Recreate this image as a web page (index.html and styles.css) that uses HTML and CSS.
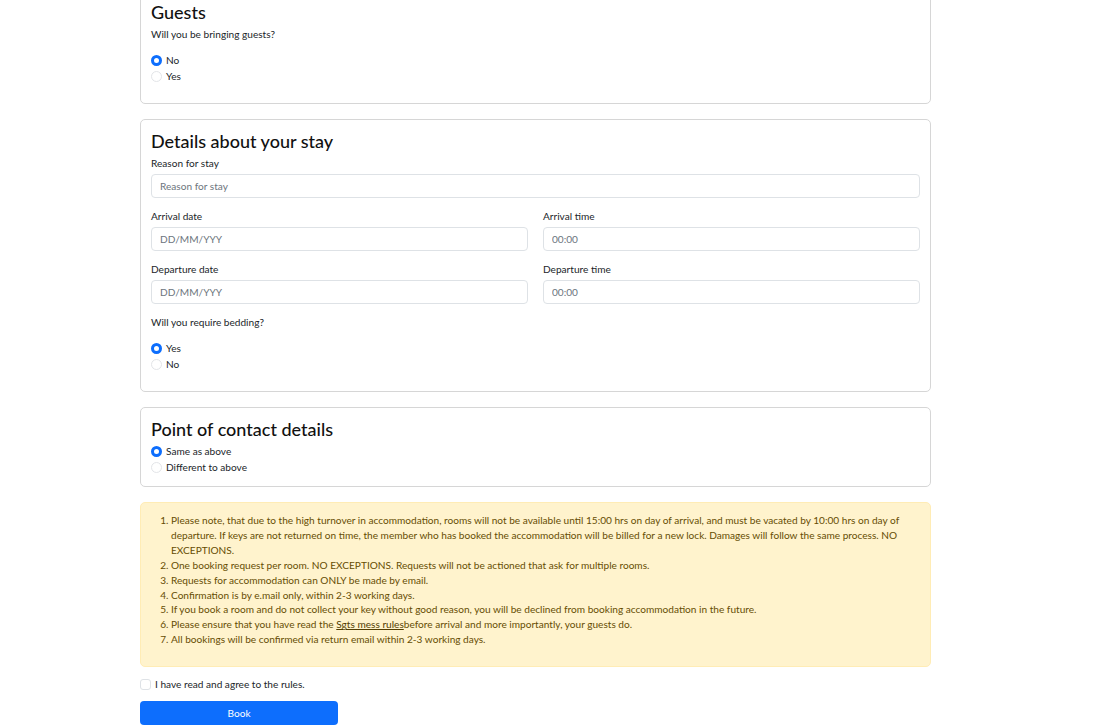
FILE: index.html
```html
<!DOCTYPE html>
<html lang="en">
<head>
<meta charset="utf-8">
<title>Accommodation booking</title>
<link rel="stylesheet" href="styles.css">
</head>
<body>
<main class="page">
  <section class="card card-guests">
    <h3 class="card-title">Guests</h3>
    <p class="question">Will you be bringing guests?</p>
    <div class="radio-group spaced">
      <label class="check"><input type="radio" name="guests" checked><span>No</span></label>
      <label class="check"><input type="radio" name="guests"><span>Yes</span></label>
    </div>
  </section>

  <section class="card">
    <h3 class="card-title">Details about your stay</h3>
    <div class="field">
      <label class="field-label">Reason for stay</label>
      <input class="control" type="text" placeholder="Reason for stay">
    </div>
    <div class="row">
      <div class="field">
        <label class="field-label">Arrival date</label>
        <input class="control" type="text" placeholder="DD/MM/YYY">
      </div>
      <div class="field">
        <label class="field-label">Arrival time</label>
        <input class="control" type="text" placeholder="00:00">
      </div>
    </div>
    <div class="row">
      <div class="field">
        <label class="field-label">Departure date</label>
        <input class="control" type="text" placeholder="DD/MM/YYY">
      </div>
      <div class="field">
        <label class="field-label">Departure time</label>
        <input class="control" type="text" placeholder="00:00">
      </div>
    </div>
    <p class="question">Will you require bedding?</p>
    <div class="radio-group spaced">
      <label class="check"><input type="radio" name="bedding" checked><span>Yes</span></label>
      <label class="check"><input type="radio" name="bedding"><span>No</span></label>
    </div>
  </section>

  <section class="card card-contact">
    <h3 class="card-title">Point of contact details</h3>
    <div class="radio-group">
      <label class="check"><input type="radio" name="contact" checked><span>Same as above</span></label>
      <label class="check"><input type="radio" name="contact"><span>Different to above</span></label>
    </div>
  </section>

  <div class="alert">
    <ol class="rules">
      <li>Please note, that due to the high turnover in accommodation, rooms will not be available until 15:00 hrs on day of arrival, and must be vacated by 10:00 hrs on day of departure. If keys are not returned on time, the member who has booked the accommodation will be billed for a new lock. Damages will follow the same process. NO EXCEPTIONS.</li>
      <li>One booking request per room. NO EXCEPTIONS. Requests will not be actioned that ask for multiple rooms.</li>
      <li>Requests for accommodation can ONLY be made by email.</li>
      <li>Confirmation is by e.mail only, within 2-3 working days.</li>
      <li>If you book a room and do not collect your key without good reason, you will be declined from booking accommodation in the future.</li>
      <li>Please ensure that you have read the <a href="#">Sgts mess rules</a>before arrival and more importantly, your guests do.</li>
      <li>All bookings will be confirmed via return email within 2-3 working days.</li>
    </ol>
  </div>

  <label class="agree"><input type="checkbox"><span>I have read and agree to the rules.</span></label>
  <button class="btn" type="button">Book</button>
</main>
</body>
</html>
```
FILE: styles.css
```css
* { box-sizing: border-box; }
html, body { margin: 0; padding: 0; background: #fff; }
body {
  font-family: Lato, "Open Sans", sans-serif;
  font-size: 10.1px;
  line-height: 16px;
  color: #212529;
}
.page {
  width: 791px;
  margin: -10px 0 0 140px;
}
.card {
  border: 1px solid #d6d6d6;
  border-radius: 5px;
  padding: 10px 10px 10px;
  margin-bottom: 15px;
}
.card-contact { padding-bottom: 11px; }
.card-title {
  margin: 0 0 3px;
  font-size: 18px;
  line-height: 22px;
  font-weight: 500;
  color: #111;
}
.question { margin: 0 0 10px; }
.radio-group { display: flex; flex-direction: column; }
.radio-group.spaced { margin-bottom: 9px; }
.check { display: flex; align-items: center; height: 16px; }
.check input {
  appearance: none;
  -webkit-appearance: none;
  width: 11px; height: 11px;
  margin: 0 4px 0 0;
  border: 1px solid #e3e5e8;
  border-radius: 50%;
  background: #fff;
}
.check input:checked {
  border: 3px solid #0d6efd;
  background: #fff;
}
.field { display: flex; flex-direction: column; margin-bottom: 10px; }
.field-label { line-height: 16px; margin-bottom: 3px; }
.control {
  height: 24px;
  border: 1px solid #dee2e6;
  border-radius: 4px;
  padding: 0 8px;
  font: inherit;
  color: #212529;
  background: #fff;
}
.control::placeholder { color: #6c757d; }
.row {
  display: grid;
  grid-template-columns: 1fr 1fr;
  column-gap: 15px;
}
.alert {
  background: #fff3cd;
  border: 1px solid #ffecb5;
  border-radius: 5px;
  color: #664d03;
  padding: 10px 10px 19px;
  margin-bottom: 9px;
}
.rules {
  margin: 0;
  padding-left: 20px;
  line-height: 14.9px;
}
.rules a { color: #523e02; }
.agree { display: flex; align-items: center; height: 16px; margin-bottom: 9px; }
.agree input {
  appearance: none;
  -webkit-appearance: none;
  width: 11px; height: 11px;
  margin: 0 4px 0 0;
  border: 1px solid #dee2e6;
  border-radius: 3px;
  background: #fff;
}
.btn {
  display: block;
  width: 198px;
  height: 24px;
  border: 0;
  border-radius: 4px;
  background: #0d6efd;
  color: #fff;
  font: inherit;
  cursor: pointer;
}
```
